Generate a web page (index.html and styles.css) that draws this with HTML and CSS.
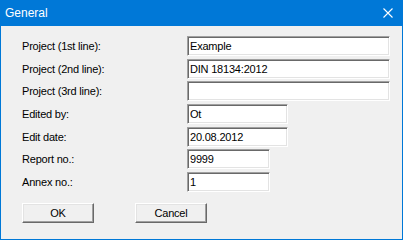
FILE: index.html
```html
<!DOCTYPE html>
<html lang="en">
<head>
  <meta charset="UTF-8" />
  <title>General</title>
  <link rel="stylesheet" href="styles.css">
</head>
<body>
  <div class="window">
    <div class="titlebar">
      <span class="title">General</span>
      <svg class="close" width="10" height="10" viewBox="0 0 10 10">
        <path d="M0.5 0.5 L9.5 9.5 M9.5 0.5 L0.5 9.5" stroke="#fff" stroke-width="1.1" fill="none"/>
      </svg>
    </div>

    <div class="content">
      <form class="fields">
        <label>Project (1st line):</label>
        <input class="wide" type="text" value="Example">
        <label>Project (2nd line):</label>
        <input class="wide" type="text" value="DIN 18134:2012">
        <label>Project (3rd line):</label>
        <input class="wide" type="text" value="">
        <label>Edited by:</label>
        <input class="mid" type="text" value="Ot">
        <label>Edit date:</label>
        <input class="mid" type="text" value="20.08.2012">
        <label>Report no.:</label>
        <input class="short" type="text" value="9999">
        <label>Annex no.:</label>
        <input class="short" type="text" value="1">
      </form>

      <div class="buttons">
        <button type="button">OK</button>
        <button type="button">Cancel</button>
      </div>
    </div>
  </div>
</body>
</html>
```

FILE: styles.css
```css
body {
  margin: 0;
  font-family: 'Liberation Sans', Arial, sans-serif;
  font-size: 11px;
  letter-spacing: -0.2px;
  color: #000;
  background: #fff;
}

.window {
  width: 403px;
  height: 240px;
  box-sizing: border-box;
  background: #f0f0f0;
  border: 1px solid #0078d7;
  border-top: none;
}

.titlebar {
  height: 26px;
  margin: 0 -1px;
  background: #0078d7;
  display: flex;
  align-items: center;
  justify-content: space-between;
  padding: 0 10px 0 5px;
}

.title {
  color: #fff;
  font-size: 12px;
  letter-spacing: 0;
}

.content {
  padding: 10px 0 0 21px;
}

.fields {
  display: grid;
  grid-template-columns: 165px auto;
  row-gap: 2.67px;
  align-items: center;
  justify-items: start;
}

.fields input {
  height: 20px;
  box-sizing: border-box;
  margin: 0;
  padding: 0 2px;
  font-family: inherit;
  font-size: 11px;
  letter-spacing: -0.2px;
  color: #000;
  background: #fff;
  border: 1px solid;
  border-color: #a0a0a0 #fff #fff #a0a0a0;
  box-shadow: inset 1px 1px #696969, inset -1px -1px #e3e3e3;
  outline: none;
}

.wide { width: 203px; }
.mid { width: 101px; }
.short { width: 83px; }

.buttons {
  display: flex;
  gap: 41px;
  margin-top: 11px;
}

.buttons button {
  width: 72px;
  height: 20px;
  box-sizing: border-box;
  margin: 0;
  padding: 0;
  font-family: inherit;
  font-size: 11px;
  letter-spacing: -0.2px;
  color: #000;
  background: #f0f0f0;
  border: 1px solid;
  border-color: #fff #696969 #696969 #fff;
  box-shadow: inset -1px -1px #a0a0a0, inset 1px 1px #e3e3e3;
}
```
